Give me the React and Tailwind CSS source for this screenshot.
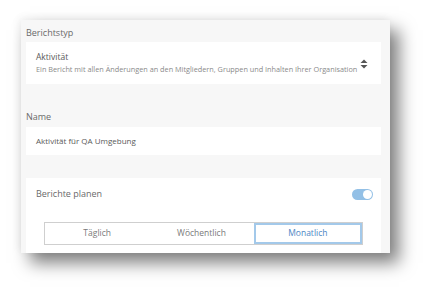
import React from 'react';

const font = { fontFamily: '"Open Sans", "Liberation Sans", sans-serif' };

const SortIcon = () => (
  <svg width="8" height="10" viewBox="0 0 8 10" className="shrink-0">
    <path d="M4 0.5 L7.5 4 L0.5 4 Z" fill="#555" />
    <path d="M4 9.5 L7.5 6 L0.5 6 Z" fill="#555" />
  </svg>
);

const Segmented = () => {
  const options = ['Täglich', 'Wöchentlich', 'Monatlich'];
  const active = 'Monatlich';
  return (
    <div className="flex h-[23px] w-[319px] border border-[#cfcfcf] bg-white">
      {options.map((opt) => (
        <div
          key={opt}
          className={
            opt === active
              ? 'flex flex-1 items-center justify-center border-2 border-[#a3c9ea] text-[8.5px] text-[#4d86c4]'
              : 'flex flex-1 items-center justify-center text-[8.5px] text-[#7a7a7a]'
          }
        >
          {opt}
        </div>
      ))}
    </div>
  );
};

export default function App() {
  return (
    <div className="h-[297px] w-[433px] bg-white pl-[21px] pt-[20px]" style={font}>
      <div className="flex h-[233px] w-[369px] flex-col bg-[#f7f7f7] pl-[5px] pr-[9px] shadow-[9px_10px_16px_rgba(0,0,0,0.5),-2px_-2px_8px_rgba(0,0,0,0.06)]">
        <div className="flex h-[22px] items-end pb-[3px] text-[9px] text-[#6a6a6a]">Berichtstyp</div>
        <div className="flex h-[42px] items-center bg-white pl-[10px] pr-[13px]">
          <div className="flex flex-1 flex-col leading-[12px]">
            <span className="text-[8.5px] text-[#595959]">Aktivität</span>
            <span className="text-[7.3px] text-[#8a8a8a] whitespace-nowrap">
              Ein Bericht mit allen Änderungen an den Mitgliedern, Gruppen und Inhalten Ihrer Organisation
            </span>
          </div>
          <div className="-ml-[6px] pt-[1px]">
            <SortIcon />
          </div>
        </div>
        <div className="flex h-[43px] items-end pb-[4px] text-[9px] text-[#6a6a6a]">Name</div>
        <div className="flex h-[28px] items-center bg-white pl-[10px] text-[8px] text-[#595959]">
          Aktivität für QA Umgebung
        </div>
        <div className="h-[23px]" />
        <div className="flex flex-1 flex-col bg-white pl-[10px] pr-[8px]">
          <div className="flex h-[31px] items-center justify-between pt-[1px]">
            <span className="text-[9px] text-[#6a6a6a]">Berichte planen</span>
            <div className="flex h-[11px] w-[21px] items-center justify-end rounded-full bg-[#93c0e6] pr-[1px]">
              <div className="h-[9px] w-[9px] rounded-full bg-white" />
            </div>
          </div>
          <div className="pl-[8px] pt-[13px]">
            <Segmented />
          </div>
        </div>
      </div>
    </div>
  );
}
